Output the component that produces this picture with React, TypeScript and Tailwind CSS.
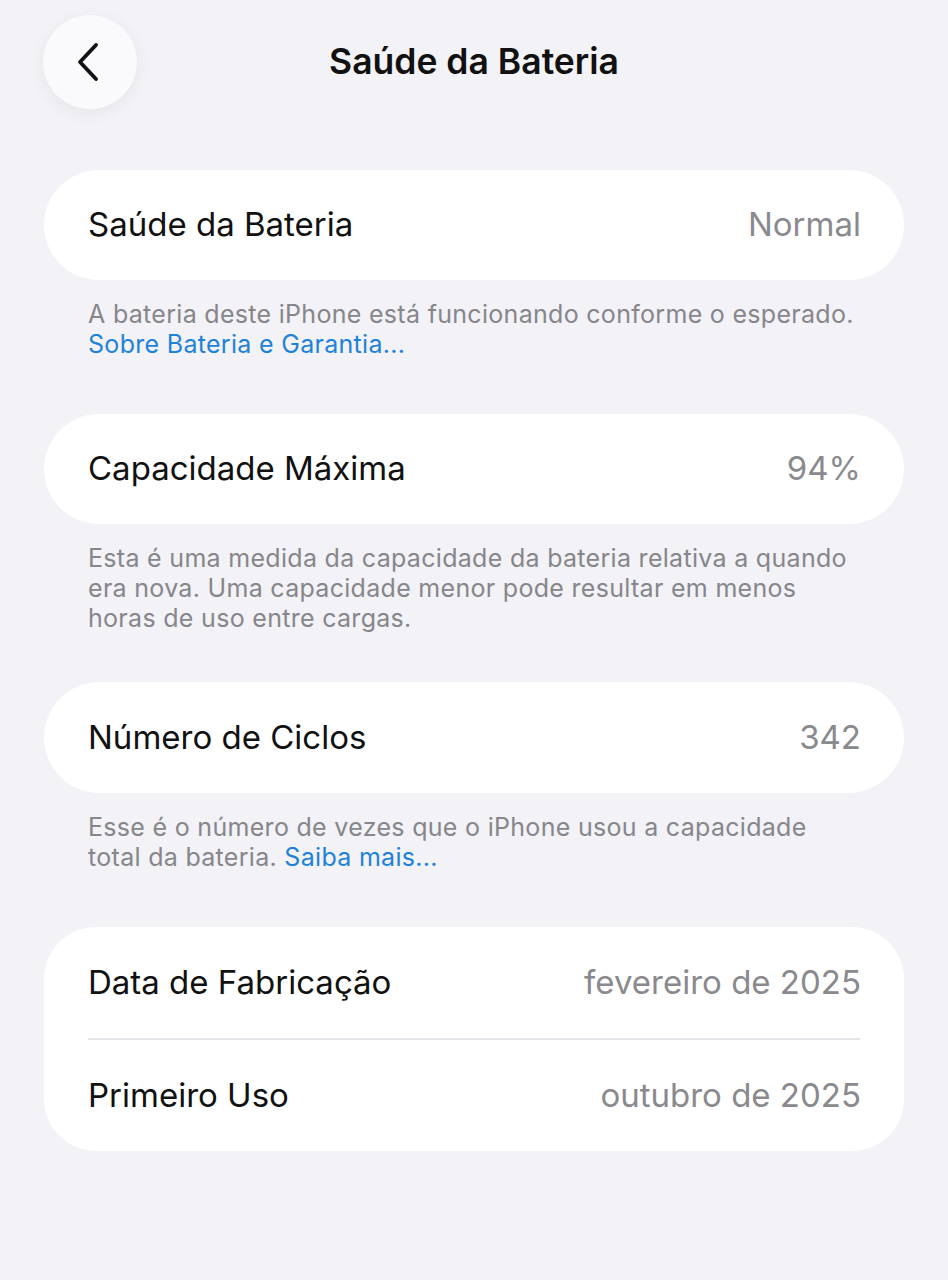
const FONT = "font-['Inter','Noto_Sans',sans-serif]";

function BackChevron() {
  return (
    <svg width="26" height="40" viewBox="0 0 26 40" fill="none">
      <path d="M21 3 L5 20 L21 37" stroke="#111" strokeWidth="3.8" strokeLinecap="round" strokeLinejoin="round" />
    </svg>
  );
}

function Row({ label, value }: { label: string; value: string }) {
  return (
    <div className="flex h-[111px] items-center justify-between pl-[44px] pr-[43px]">
      <span className="text-[33px] text-[#111]">{label}</span>
      <span className="text-[33px] text-[#8a8a8e]">{value}</span>
    </div>
  );
}

function Footer({ children }: { children: React.ReactNode }) {
  return (
    <p className="mt-[19px] px-[44px] text-[25px] leading-[30px] tracking-[0.3px] text-[#86868b]">{children}</p>
  );
}

export default function App() {
  return (
    <div className={`min-h-screen bg-[#f2f2f7] ${FONT} antialiased`}>
      <header className="flex items-center pt-[15px]">
        <div className="w-[137px] shrink-0 pl-[43px]">
          <button className="flex h-[94px] w-[94px] items-center justify-center rounded-full bg-[#fafafc] shadow-[0_4px_18px_rgba(0,0,0,0.06)]">
            <span className="-ml-[4px] flex"><BackChevron /></span>
          </button>
        </div>
        <h1 className="flex-1 text-center text-[35.5px] font-semibold text-[#111]">Saúde da Bateria</h1>
        <div className="w-[137px] shrink-0" />
      </header>

      <main className="px-[44px] pt-[61px]">
        <section>
          <div className="rounded-full bg-white">
            <div className="flex h-[110px] items-center justify-between pl-[44px] pr-[43px]">
              <span className="text-[33px] text-[#111]">Saúde da Bateria</span>
              <span className="text-[33px] text-[#8a8a8e]">Normal</span>
            </div>
          </div>
          <Footer>
            A bateria deste iPhone está funcionando conforme o esperado.
            <br />
            <span className="text-[#1f82d8]">Sobre Bateria e Garantia...</span>
          </Footer>
        </section>

        <section className="mt-[55px]">
          <div className="rounded-full bg-white">
            <div className="flex h-[110px] items-center justify-between pl-[44px] pr-[43px]">
              <span className="text-[33px] text-[#111]">Capacidade Máxima</span>
              <span className="text-[33px] text-[#8a8a8e]">94%</span>
            </div>
          </div>
          <Footer>
            Esta é uma medida da capacidade da bateria relativa a quando
            <br />
            era nova. Uma capacidade menor pode resultar em menos
            <br />
            horas de uso entre cargas.
          </Footer>
        </section>

        <section className="mt-[49px]">
          <div className="rounded-full bg-white">
            <div className="flex h-[111px] items-center justify-between pl-[44px] pr-[43px]">
              <span className="text-[33px] text-[#111]">Número de Ciclos</span>
              <span className="text-[33px] text-[#8a8a8e]">342</span>
            </div>
          </div>
          <Footer>
            Esse é o número de vezes que o iPhone usou a capacidade
            <br />
            total da bateria. <span className="text-[#1f82d8]">Saiba mais...</span>
          </Footer>
        </section>

        <section className="mt-[55px] rounded-[52px] bg-white">
          <Row label="Data de Fabricação" value="fevereiro de 2025" />
          <div className="mx-[44px] h-[2px] bg-[#e6e6ea]" />
          <Row label="Primeiro Uso" value="outubro de 2025" />
        </section>
      </main>
    </div>
  );
}
